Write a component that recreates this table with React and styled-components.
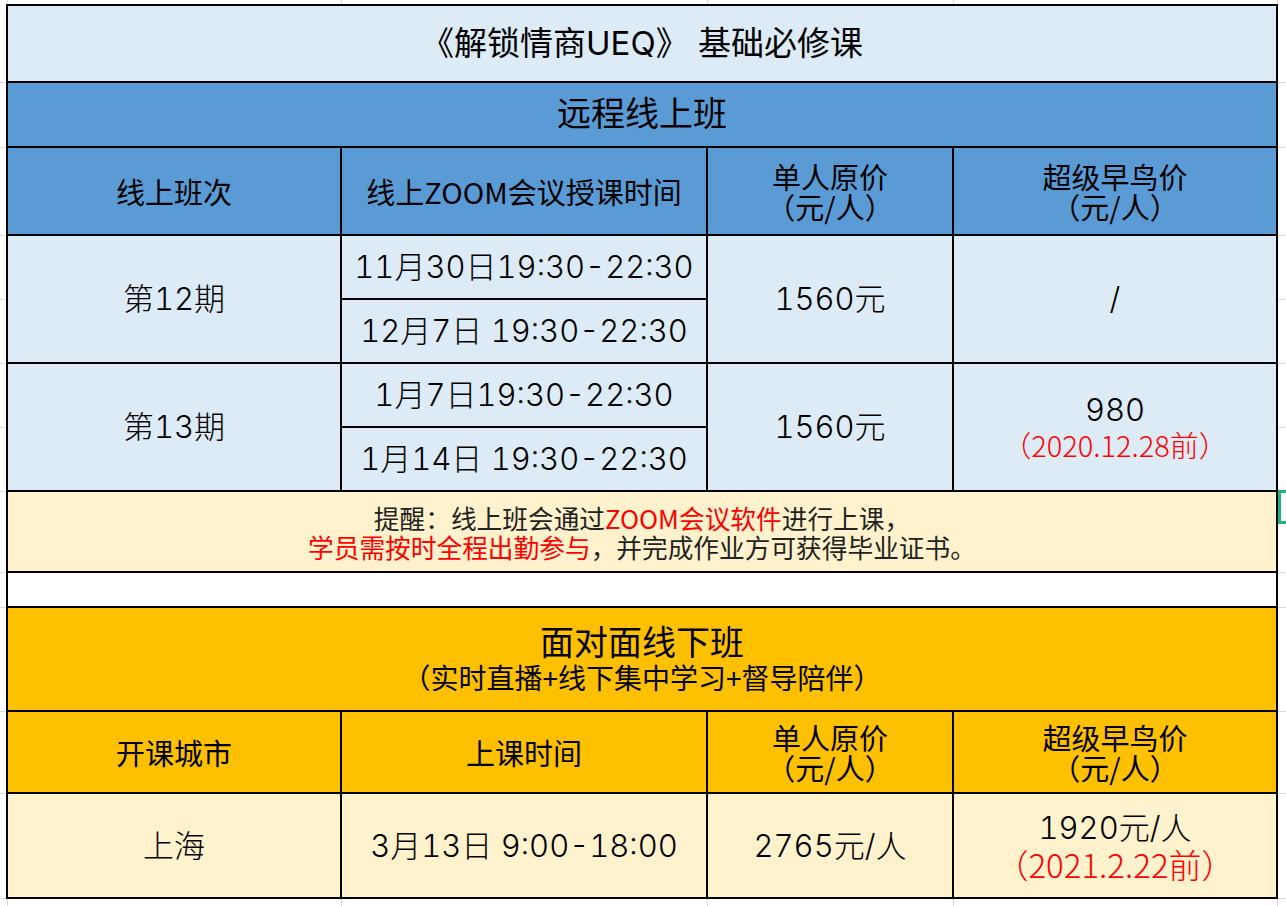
import styled, { createGlobalStyle } from "styled-components";

const CJK = `"Noto Sans CJK SC", sans-serif`;
const MIXED = `"Inter", "Noto Sans CJK SC", sans-serif`;

const LIGHT_BLUE = "#ddebf7";
const BLUE = "#5b9bd5";
const YELLOW = "#ffc000";
const CREAM = "#fff2cc";
const RED = "#ff0000";

// spreadsheet gridlines that peek out around the table
const H_LINES = [82, 147, 235, 299, 363, 427, 491, 572, 607, 711, 793, 898];
const V_LINES = [7, 341, 707, 953, 1277];
const gridBg = [
  ...H_LINES.map(
    (y) => `linear-gradient(#dadada, #dadada) 0 ${y}px / 100% 1px no-repeat`
  ),
  ...V_LINES.map(
    (x) => `linear-gradient(#dadada, #dadada) ${x}px 0 / 1px 100% no-repeat`
  ),
].join(",");

const GlobalStyle = createGlobalStyle`
  html, body {
    margin: 0;
    padding: 0;
    background: #fff;
  }
  body {
    font-family: ${MIXED};
    color: #000;
  }
`;

const Page = styled.div`
  position: relative;
  width: 1286px;
  height: 906px;
  box-sizing: border-box;
  padding: 4px 0 0 6px;
  overflow: hidden;
  background: ${gridBg}, #fff;
`;

const Sheet = styled.div`
  display: grid;
  grid-template-columns: 332px 364px 244px 322px;
  grid-template-rows: 75px 63px 86px 62px 62px 62px 62px 79px 33px 102px 80px 103px;
  gap: 2px;
  padding: 2px;
  width: max-content;
  background: #000;
`;

const Cell = styled.div`
  grid-column: span ${(p) => p.$span || 1};
  grid-row: span ${(p) => p.$rows || 1};
  background: ${(p) => p.$bg || "#fff"};
  display: flex;
  flex-direction: column;
  align-items: center;
  justify-content: center;
  text-align: center;
  font-size: ${(p) => p.$size || 31}px;
  font-weight: 300;
  font-variant-numeric: tabular-nums;
  line-height: ${(p) => p.$lh || "1.2"};
  white-space: nowrap;
`;

const Banner = styled(Cell).attrs({ $span: 4 })`
  font-family: ${MIXED};
  font-weight: 400;
  font-variant-numeric: normal;
`;

const BannerSub = styled.span`
  font-family: ${CJK};
  font-size: 28px;
  line-height: 32px;
`;

const Head = styled(Cell)`
  font-family: ${CJK};
  font-size: 29px;
  font-weight: 400;
  line-height: 30px;
`;

const Note = styled(Cell).attrs({ $span: 4 })`
  font-family: ${CJK};
  font-size: 25.7px;
  font-weight: 400;
  line-height: 29px;
  color: #222;
`;

const Red = styled.span`
  color: ${RED};
`;

const EarlyDate = styled.div`
  font-family: ${CJK};
  font-weight: 300;
  color: ${RED};
  font-size: ${(p) => p.$size || 29}px;
  line-height: ${(p) => p.$lh || 34}px;
`;

const Selection = styled.div`
  position: absolute;
  left: 1278px;
  top: 490px;
  width: 14px;
  height: 34px;
  box-sizing: border-box;
  border: 3px solid #21b17a;
  border-right: none;
`;

const onlineRows = [
  {
    term: "第12期",
    dates: ["11月30日19:30-22:30", "12月7日 19:30-22:30"],
    price: "1560元",
    early: "/",
  },
  {
    term: "第13期",
    dates: ["1月7日19:30-22:30", "1月14日 19:30-22:30"],
    price: "1560元",
    early: "980",
    until: "（2020.12.28前）",
  },
];

const PriceHead = ({ bg, label }) => (
  <Head $bg={bg}>
    <span>{label}</span>
    <span>（元/人）</span>
  </Head>
);

export default function App() {
  return (
    <Page>
      <GlobalStyle />
      <Sheet>
        <Banner $bg={LIGHT_BLUE} $size={33}>
          《解锁情商UEQ》 基础必修课
        </Banner>
        <Banner $bg={BLUE} $size={34}>
          远程线上班
        </Banner>

        <Head $bg={BLUE}>线上班次</Head>
        <Head $bg={BLUE}>线上ZOOM会议授课时间</Head>
        <PriceHead bg={BLUE} label="单人原价" />
        <PriceHead bg={BLUE} label="超级早鸟价" />

        {onlineRows.map((row) => (
          <>
            <Cell key={row.term} $bg={LIGHT_BLUE} $rows={2}>
              {row.term}
            </Cell>
            <Cell $bg={LIGHT_BLUE}>{row.dates[0]}</Cell>
            <Cell $bg={LIGHT_BLUE} $rows={2}>
              {row.price}
            </Cell>
            <Cell $bg={LIGHT_BLUE} $rows={2} $lh="34px">
              <span>{row.early}</span>
              {row.until && <EarlyDate>{row.until}</EarlyDate>}
            </Cell>
            <Cell $bg={LIGHT_BLUE}>{row.dates[1]}</Cell>
          </>
        ))}

        <Note $bg={CREAM}>
          <span>
            提醒：线上班会通过<Red>ZOOM会议软件</Red>进行上课，
          </span>
          <span>
            <Red>学员需按时全程出勤参与</Red>，并完成作业方可获得毕业证书。
          </span>
        </Note>

        <Cell $span={4} />

        <Banner $bg={YELLOW} $size={34} $lh="36px">
          <span>面对面线下班</span>
          <BannerSub>（实时直播+线下集中学习+督导陪伴）</BannerSub>
        </Banner>

        <Head $bg={YELLOW}>开课城市</Head>
        <Head $bg={YELLOW}>上课时间</Head>
        <PriceHead bg={YELLOW} label="单人原价" />
        <PriceHead bg={YELLOW} label="超级早鸟价" />

        <Cell $bg={CREAM}>上海</Cell>
        <Cell $bg={CREAM}>3月13日 9:00-18:00</Cell>
        <Cell $bg={CREAM}>2765元/人</Cell>
        <Cell $bg={CREAM} $lh="36px">
          <span>1920元/人</span>
          <EarlyDate $size={33} $lh={36}>
            （2021.2.22前）
          </EarlyDate>
        </Cell>
      </Sheet>
      <Selection />
    </Page>
  );
}
